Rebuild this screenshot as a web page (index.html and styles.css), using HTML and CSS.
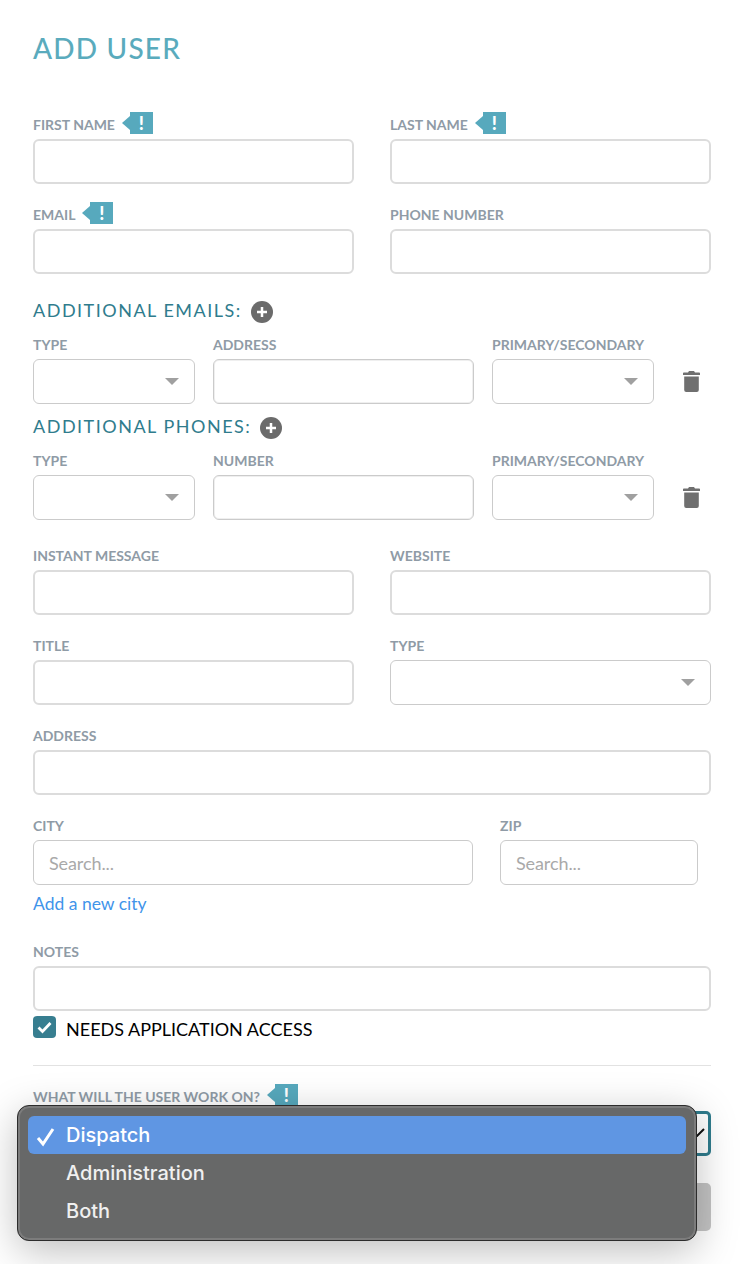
FILE: index.html
```html
<!DOCTYPE html>
<html lang="en">
<head>
<meta charset="utf-8">
<title>Add User</title>
<link rel="stylesheet" href="styles.css">
</head>
<body>
<main class="page">
  <h1 class="title">ADD USER</h1>
  <form class="form">
    <div class="row two">
      <div class="field"><label class="label">FIRST NAME<span class="req">!</span></label><input class="input thick"></div>
      <div class="field"><label class="label">LAST NAME<span class="req">!</span></label><input class="input thick"></div>
    </div>
    <div class="row two">
      <div class="field"><label class="label">EMAIL<span class="req">!</span></label><input class="input thick"></div>
      <div class="field"><label class="label">PHONE NUMBER</label><input class="input thick"></div>
    </div>

    <h2 class="heading first">ADDITIONAL EMAILS: <svg class="plus" viewBox="0 0 22 22"><circle cx="11" cy="11" r="11"/><path d="M11 6v10M6 11h10"/></svg></h2>
    <div class="row multi">
      <div class="field"><label class="label">TYPE</label><div class="select-wrap"><select class="input"></select></div></div>
      <div class="field"><label class="label">ADDRESS</label><input class="input soft"></div>
      <div class="field"><label class="label">PRIMARY/SECONDARY</label><div class="select-wrap"><select class="input"></select></div></div>
      <svg class="trash" viewBox="0 0 17 21"><path d="M6 0h5l1 1.500h4.200a.8.800 0 0 1 .8.800V4H0V2.300a.8.800 0 0 1 .8-.8H5z"/><path d="M1.200 5.500h14.600V19a2 2 0 0 1-2 2H3.200a2 2 0 0 1-2-2z"/></svg>
    </div>

    <h2 class="heading">ADDITIONAL PHONES: <svg class="plus" viewBox="0 0 22 22"><circle cx="11" cy="11" r="11"/><path d="M11 6v10M6 11h10"/></svg></h2>
    <div class="row multi last">
      <div class="field"><label class="label">TYPE</label><div class="select-wrap"><select class="input"></select></div></div>
      <div class="field"><label class="label">NUMBER</label><input class="input soft"></div>
      <div class="field"><label class="label">PRIMARY/SECONDARY</label><div class="select-wrap"><select class="input"></select></div></div>
      <svg class="trash" viewBox="0 0 17 21"><path d="M6 0h5l1 1.500h4.200a.8.800 0 0 1 .8.800V4H0V2.300a.8.800 0 0 1 .8-.8H5z"/><path d="M1.200 5.500h14.600V19a2 2 0 0 1-2 2H3.200a2 2 0 0 1-2-2z"/></svg>
    </div>

    <div class="row two">
      <div class="field"><label class="label">INSTANT MESSAGE</label><input class="input thick"></div>
      <div class="field"><label class="label">WEBSITE</label><input class="input thick"></div>
    </div>
    <div class="row two">
      <div class="field"><label class="label">TITLE</label><input class="input thick"></div>
      <div class="field"><label class="label">TYPE</label><div class="select-wrap"><select class="input"></select></div></div>
    </div>
    <div class="row">
      <div class="field"><label class="label">ADDRESS</label><input class="input thick"></div>
    </div>
    <div class="row city">
      <div class="field"><label class="label">CITY</label><input class="input search" placeholder="Search..."></div>
      <div class="field"><label class="label">ZIP</label><input class="input search" placeholder="Search..."></div>
    </div>
    <a class="link" href="#">Add a new city</a>
    <div class="field"><label class="label">NOTES</label><input class="input thick"></div>
    <label class="check">
      <span class="box"><svg viewBox="0 0 23 22"><path d="M5.500 11.500l4 4 8-8.500"/></svg></span>
      <span class="check-text">NEEDS APPLICATION ACCESS</span>
    </label>
    <hr class="rule">
    <div class="field"><label class="label">WHAT WILL THE USER WORK ON?<span class="req">!</span></label>
      <div class="focus-select"><svg class="chev" viewBox="0 0 16 10"><path d="M1 2l7 7 7-7"/></svg></div>
    </div>
    <button class="save" type="button">Save</button>
  </form>

  <div class="menu">
    <div class="item on"><svg class="tick" viewBox="0 0 20 20"><path d="M2 11l5 6L17 2"/></svg>Dispatch</div>
    <div class="item">Administration</div>
    <div class="item">Both</div>
  </div>
</main>
</body>
</html>
```
FILE: styles.css
```css
* { box-sizing: border-box; }
html, body { margin: 0; height: 100%; overflow: hidden; background: #fff; }
body { font-family: Lato, "Liberation Sans", sans-serif; }
.page { position: relative; height: 1264px; padding: 30px 31px 0 33px; overflow: hidden; }
.title { margin: 0 0 48px; height: 36px; font-size: 28px; line-height: 36px; font-weight: 500; letter-spacing: 1.200px; color: #5aabbd; }
.row { margin-bottom: 20px; }
.two { display: grid; grid-template-columns: 321px 321px; column-gap: 36px; }
.multi { display: grid; grid-template-columns: 162px 261px 162px 20px; column-gap: 18px; margin-bottom: 0; align-items: end; }
.multi.last { margin-bottom: 25px; }
.city { display: grid; grid-template-columns: 440px 198px; column-gap: 27px; margin-bottom: 0; }
.label { display: flex; align-items: center; height: 22px; margin-bottom: 3px; font-size: 14px; line-height: 22px; font-weight: 700; color: #8f9ba6; white-space: pre; }
.req { position: relative; display: inline-flex; align-items: center; justify-content: center; width: 23px; height: 22px; margin: -4px 0 0 15px; background: #57a9bd; color: #fff; font-size: 18px; font-weight: 900; line-height: 22px; }
.req::before { content: ""; position: absolute; left: -8px; top: 4px; border-top: 7px solid transparent; border-bottom: 7px solid transparent; border-right: 8px solid #57a9bd; }
.input { display: block; width: 100%; height: 45px; padding: 0 15px; border: 1px solid #cbcbcb; border-radius: 6px; background: #fff; font: 17px Lato, sans-serif; color: #333; appearance: none; outline: none; }
.input::placeholder { color: #a9a9a9; opacity: 1; }
.search { padding-top: 1px; font-size: 18px; letter-spacing: -0.100px; }
.soft { box-shadow: inset 0 0 0 1px #efefef; }
.thick { border: 2px solid #dcdcdc; }
.select-wrap { position: relative; }
.select-wrap::after { content: ""; position: absolute; right: 16px; top: 19px; border-left: 7px solid transparent; border-right: 7px solid transparent; border-top: 7px solid #a0a0a0; }
.heading { display: flex; align-items: flex-start; gap: 9px; height: 24px; margin: 11px 0 11px; font-size: 18px; line-height: 22px; font-weight: 400; letter-spacing: 1.500px; color: #2f7c8d; white-space: nowrap; }
.heading.first { margin-top: 25px; }
.plus { width: 22px; height: 22px; margin-top: 2px; }
.plus circle { fill: #6b6b6b; }
.plus path { stroke: #fff; stroke-width: 2.500px; fill: none; }
.trash { width: 17px; height: 21px; margin-bottom: 12px; margin-left: 11px; fill: #6f6f6f; overflow: visible; }
.link { display: block; height: 24px; margin: 7px 0 25px; font-size: 17.500px; line-height: 24px; color: #3f94ea; text-decoration: none; }
.check { display: flex; align-items: center; height: 22px; margin-top: 5px; font-size: 18px; color: #000; }
.check-text { margin-top: 4px; }
.box { width: 23px; height: 22px; margin-right: 10px; border-radius: 4px; background: #377e90; }
.box svg { display: block; width: 23px; height: 22px; fill: none; stroke: #fff; stroke-width: 2.800px; }
.rule { height: 1px; margin: 27px 0 20px; border: 0; background: #e2e2e2; }
.focus-select { position: relative; height: 45px; border: 3px solid #2f7c8d; border-radius: 5px; background: #fff; }
.chev { position: absolute; right: 3px; top: 13px; width: 16px; height: 10px; fill: none; stroke: #111; stroke-width: 2px; }
.save { display: block; width: 100%; height: 48px; margin-top: 27px; border: 0; border-radius: 5px; background: #c4c4c4; color: #fff; font: 18px Lato, sans-serif; }
.menu { position: absolute; left: 17px; top: 1105px; width: 680px; height: 136px; padding: 10px; border: 1px solid #2c2c2c; border-radius: 12px; background: #676868; box-shadow: inset 0 0 0 2px #7c7c7c, 0 10px 40px rgba(0, 0, 0, 0.26); font-family: Inter, Roboto, sans-serif; }
.item { position: relative; height: 38px; padding-left: 38px; border-radius: 6px; font-size: 20px; font-weight: 500; line-height: 38px; color: #f0f0f0; }
.item.on { background: #5f96e3; color: #fff; }
.tick { position: absolute; left: 8px; top: 11px; width: 20px; height: 20px; fill: none; stroke: #fff; stroke-width: 3px; }
```
